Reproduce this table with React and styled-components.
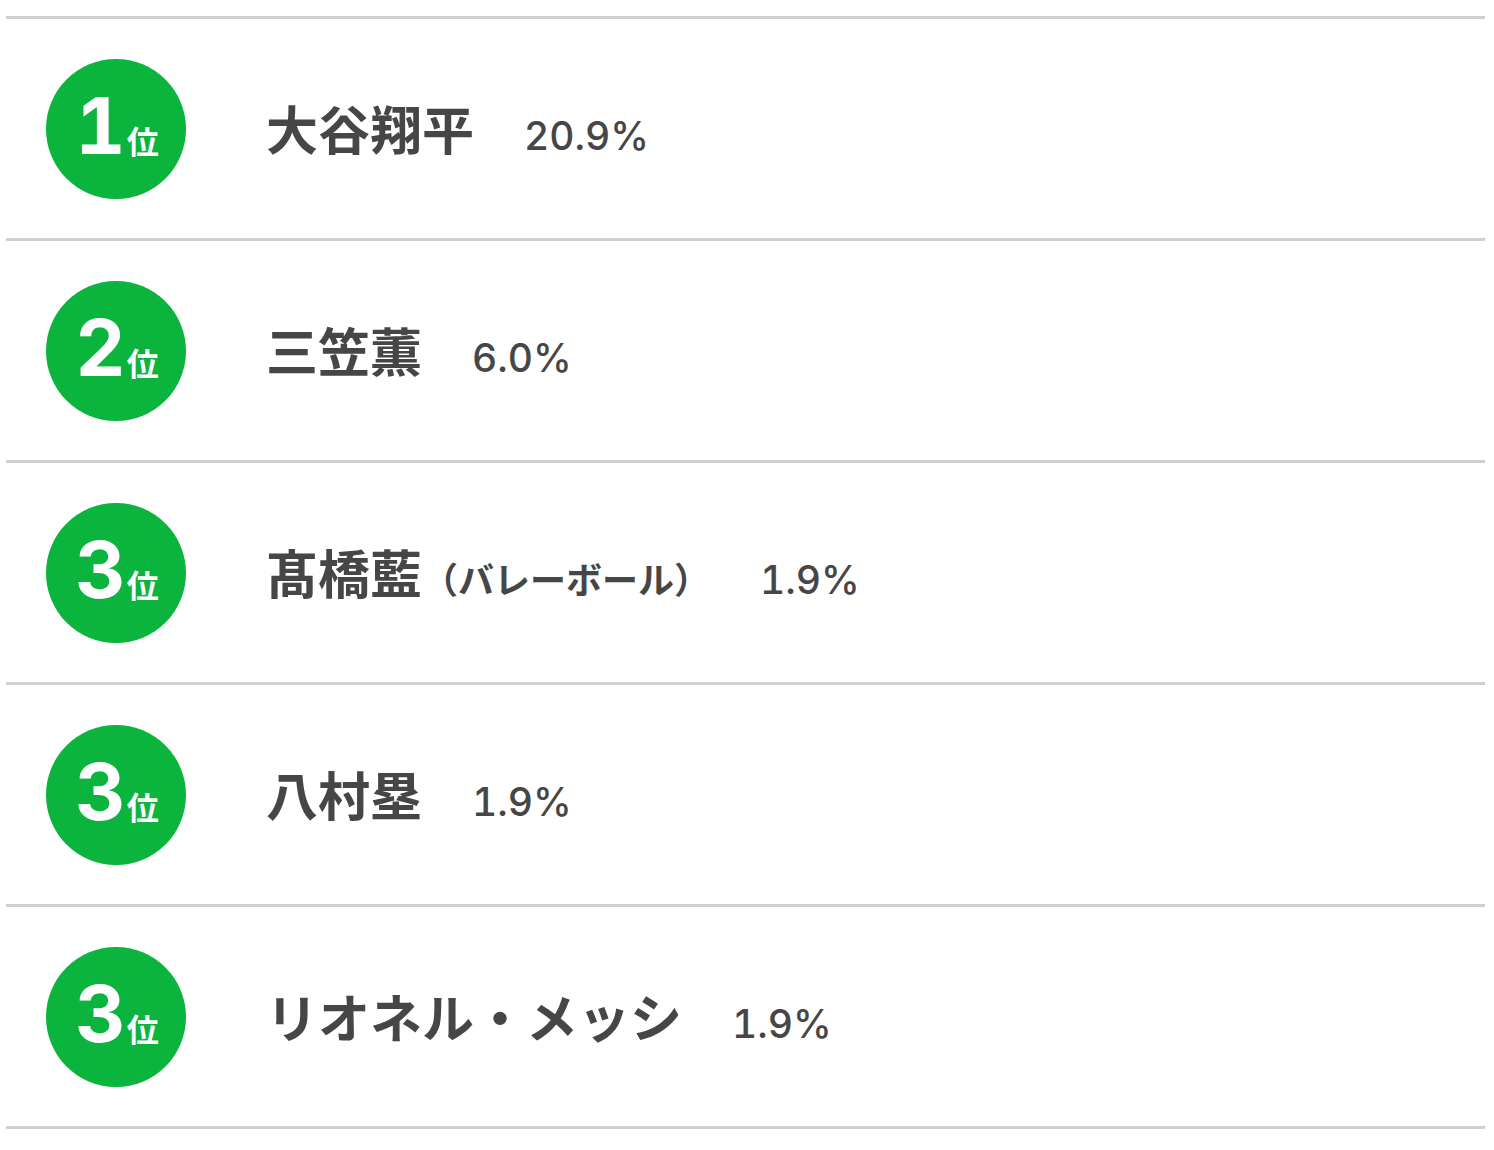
import React from 'react';
import styled, { createGlobalStyle } from 'styled-components';

const GlobalStyle = createGlobalStyle`
  body {
    margin: 0;
    background: #fff;
    font-family: "Noto Sans CJK JP", sans-serif;
  }
`;

const RankingList = styled.ul`
  list-style: none;
  margin: 16px 9px 0 6px;
  padding: 0;
  border-top: 3px solid #d0d0d0;
`;

const RankingRow = styled.li`
  display: flex;
  align-items: center;
  height: 219px;
  padding-left: 40px;
  border-bottom: 3px solid #d0d0d0;
`;

const RankBadge = styled.div`
  display: flex;
  align-items: center;
  justify-content: center;
  flex-shrink: 0;
  box-sizing: border-box;
  width: 140px;
  height: 140px;
  padding-bottom: 6px;
  border-radius: 50%;
  background: #0bb43c;
  color: #fff;
`;

const RankLabel = styled.span`
  line-height: 1;
  white-space: nowrap;
  padding-left: 2px;
`;

const RankNumber = styled.span`
  font-family: Inter, "Liberation Sans", sans-serif;
  font-weight: 700;
  font-size: 78px;
  font-variant-numeric: tabular-nums;
`;

const RankUnit = styled.span`
  font-family: "Noto Sans CJK JP", sans-serif;
  font-weight: 700;
  font-size: 32px;
  margin-left: 1px;
`;

const Entry = styled.div`
  display: flex;
  align-items: baseline;
  margin-left: 80px;
  color: #464646;
`;

const Name = styled.span`
  font-family: "Noto Sans CJK JP", sans-serif;
  font-weight: 700;
  font-size: 52px;
  line-height: 1;
  white-space: nowrap;
`;

const NameNote = styled.span`
  font-size: 36px;
`;

const Rate = styled.span`
  font-family: Inter, "Liberation Sans", sans-serif;
  font-weight: 500;
  font-size: 39px;
  font-variant-numeric: tabular-nums;
  margin-left: 50px;
  line-height: 1;
`;

const RANKING = [
  { rank: 1, name: '大谷翔平', rate: '20.9%' },
  { rank: 2, name: '三笠薫', rate: '6.0%' },
  { rank: 3, name: '髙橋藍', note: '（バレーボール）', rate: '1.9%' },
  { rank: 3, name: '八村塁', rate: '1.9%' },
  { rank: 3, name: 'リオネル・メッシ', rate: '1.9%' },
];

const App = () => (
  <>
    <GlobalStyle />
    <RankingList>
      {RANKING.map((item, index) => (
        <RankingRow key={index}>
          <RankBadge>
            <RankLabel>
              <RankNumber>{item.rank}</RankNumber>
              <RankUnit>位</RankUnit>
            </RankLabel>
          </RankBadge>
          <Entry>
            <Name>
              {item.name}
              {item.note && <NameNote>{item.note}</NameNote>}
            </Name>
            <Rate>{item.rate}</Rate>
          </Entry>
        </RankingRow>
      ))}
    </RankingList>
  </>
);

export default App;
